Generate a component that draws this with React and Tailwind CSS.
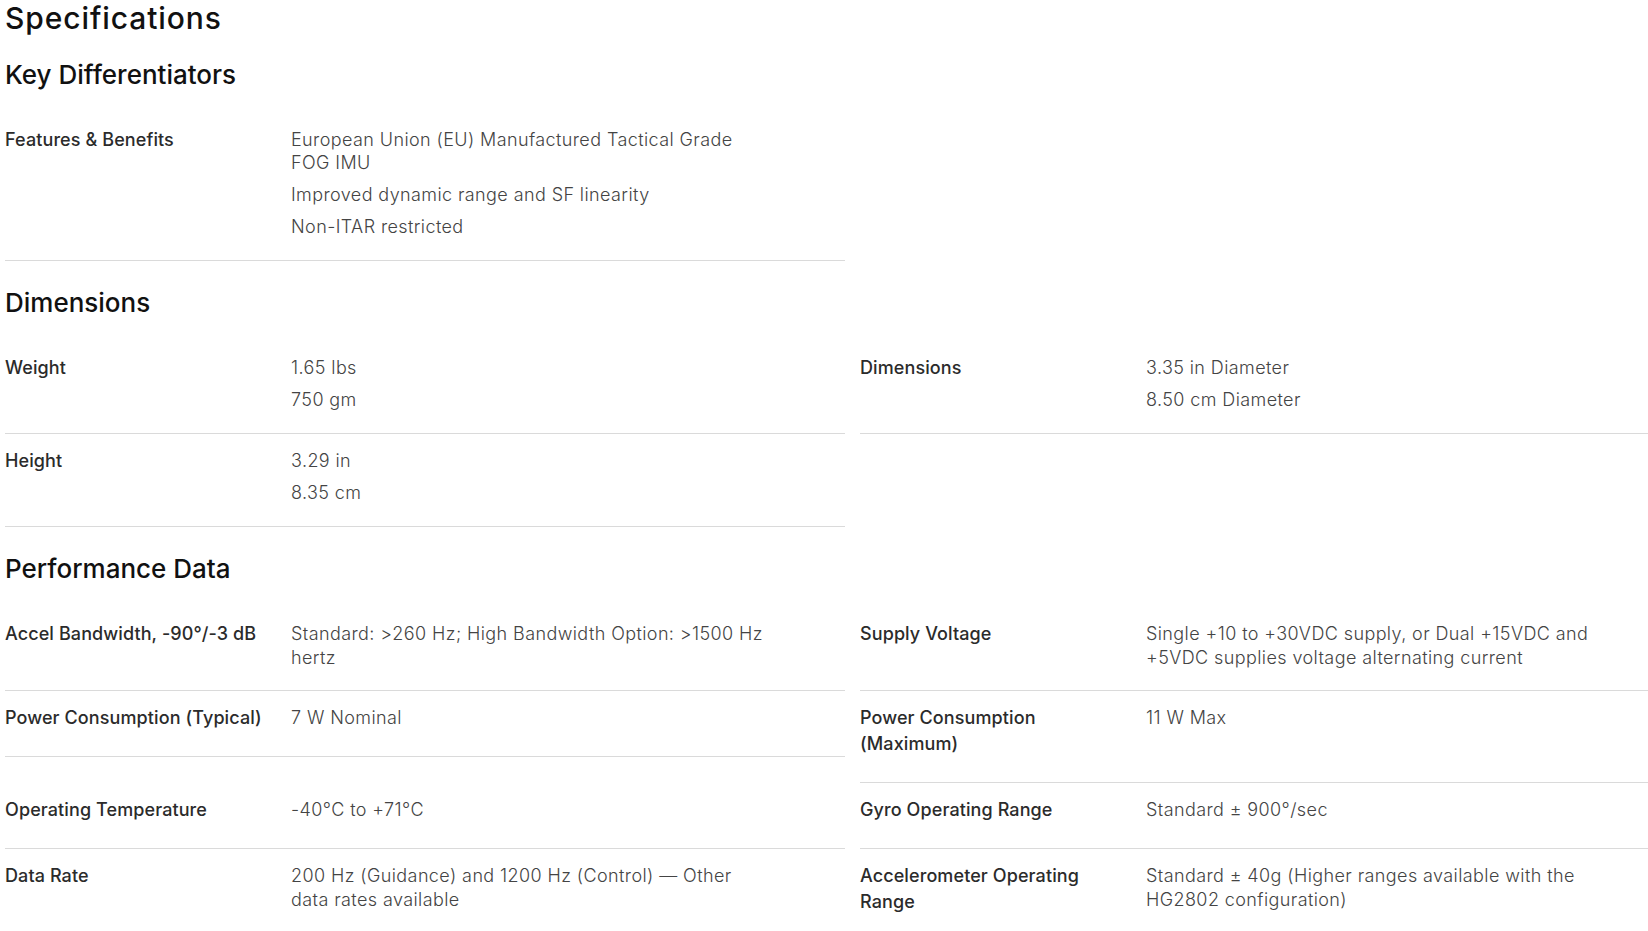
import React from 'react';

const sections = [
  {
    title: 'Key Differentiators',
    rows: [
      [
        {
          label: 'Features & Benefits',
          values: [
            'European Union (EU) Manufactured Tactical Grade FOG IMU',
            'Improved dynamic range and SF linearity',
            'Non-ITAR restricted',
          ],
        },
      ],
    ],
  },
  {
    title: 'Dimensions',
    rows: [
      [
        { label: 'Weight', values: ['1.65 lbs', '750 gm'] },
        { label: 'Dimensions', values: ['3.35 in Diameter', '8.50 cm Diameter'] },
      ],
      [{ label: 'Height', values: ['3.29 in', '8.35 cm'] }],
    ],
  },
  {
    title: 'Performance Data',
    rows: [
      [
        { label: 'Accel Bandwidth, -90°/-3 dB', values: ['Standard: >260 Hz; High Bandwidth Option: >1500 Hz hertz'] },
        { label: 'Supply Voltage', values: ['Single +10 to +30VDC supply, or Dual +15VDC and +5VDC supplies voltage alternating current'] },
      ],
      [
        { label: 'Power Consumption (Typical)', values: ['7 W Nominal'] },
        { label: 'Power Consumption (Maximum)', values: ['11 W Max'] },
      ],
      [
        { label: 'Operating Temperature', values: ['-40°C to +71°C'] },
        { label: 'Gyro Operating Range', values: ['Standard ± 900°/sec'] },
      ],
      [
        { label: 'Data Rate', values: ['200 Hz (Guidance) and 1200 Hz (Control) — Other data rates available'] },
        { label: 'Accelerometer Operating Range', values: ['Standard ± 40g (Higher ranges available with the HG2802 configuration)'] },
      ],
    ],
  },
];

const SpecCell = ({ label, values }) => (
  <div className="flex border-b border-[#dadada] pt-[14px]">
    <div className="w-[286px] shrink-0 pr-[20px] pb-[25px] text-[18px] leading-[26px] font-medium tracking-[0.1px] text-[#2b2b2b]">
      {label}
    </div>
    <div className="mt-[1px] flex w-[478px] flex-col gap-[8.6px] pb-[21.5px] text-[18px] leading-[23.4px] font-light tracking-[0.4px] text-[#444]">
      {values.map((v) => (
        <p key={v}>{v}</p>
      ))}
    </div>
  </div>
);

export default function App() {
  return (
    <div className="min-h-screen overflow-hidden bg-white pl-[5px]" style={{ fontFamily: 'Inter, "Noto Sans", sans-serif' }}>
      <h2 className="text-[30px] leading-[36px] font-medium tracking-[0.9px] text-[#111]">Specifications</h2>
      {sections.map((s, i) => (
        <section key={s.title} className={i === 0 ? 'mt-[23px]' : 'mt-[26px]'}>
          <h3 className="mb-[22px] text-[26px] leading-[32px] font-medium text-[#111]">{s.title}</h3>
          <div className="grid grid-cols-[840px_1fr] items-start gap-x-[15px]">
            {s.rows.map((row) =>
              [0, 1].map((c) =>
                row[c] ? <SpecCell key={row[c].label} {...row[c]} /> : <div key={row[0].label + '-empty'} />
              )
            )}
          </div>
        </section>
      ))}
    </div>
  );
}
